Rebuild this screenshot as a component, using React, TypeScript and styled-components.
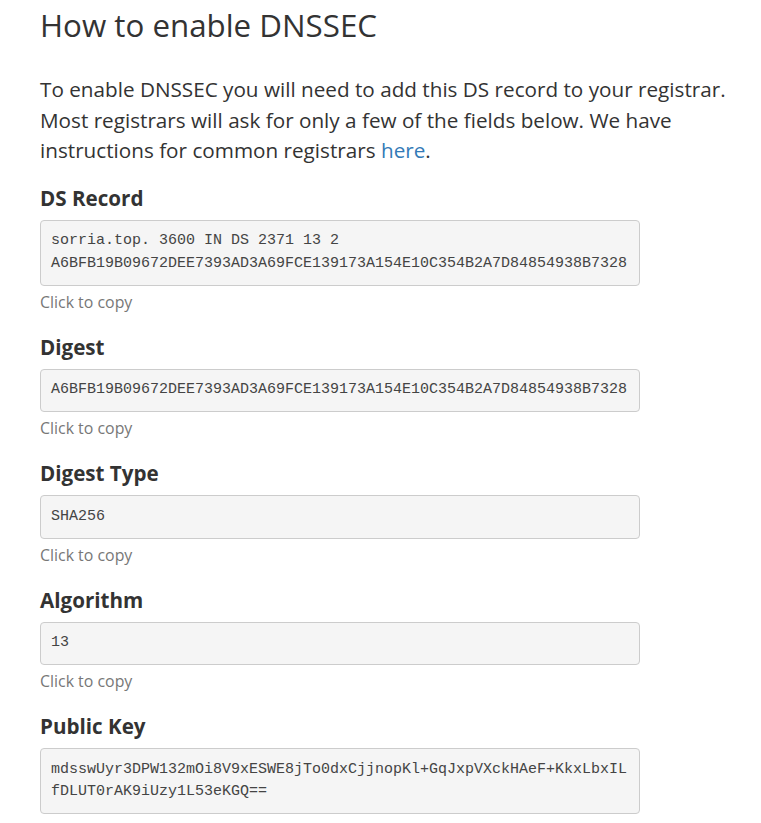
import React from "react";
import styled, { createGlobalStyle } from "styled-components";

const Global = createGlobalStyle`
  html, body { margin: 0; padding: 0; background: #fff; }
  body {
    font-family: "Open Sans", "Noto Sans", sans-serif;
    color: #333;
  }
`;

const Page = styled.main`
  padding: 0 0 0 40px;
  width: 761px;
  box-sizing: border-box;
`;

const Title = styled.h1`
  margin: 5px 0 0;
  font-size: 31.3px;
  font-weight: 400;
  line-height: 40px;
  color: #333;
`;

const Intro = styled.p`
  margin: 29px 0 0;
  font-size: 20.7px;
  line-height: 30.5px;
  max-width: 705px;
`;

const Link = styled.a`
  color: #337ab7;
  text-decoration: none;
`;

const Section = styled.section`
  margin-top: 22px;
  &:first-of-type { margin-top: 20px; }
`;

const Heading = styled.h4`
  margin: 0 0 10px;
  font-size: 20.6px;
  font-weight: 700;
  line-height: 24px;
  color: #333;
`;

const Code = styled.pre`
  margin: 0 0 5px;
  width: 600px;
  box-sizing: border-box;
  padding: 9.5px 10px;
  background: #f5f5f5;
  border: 1px solid #ccc;
  border-radius: 4px;
  font-family: "Liberation Mono", "Courier New", monospace;
  font-size: 15px;
  line-height: 22.5px;
  color: #444;
  white-space: pre-wrap;
  word-break: break-all;
`;

const Hint = styled.div`
  font-size: 15.9px;
  line-height: 22px;
  color: #777;
`;

const records: { label: string; value: string; hint?: boolean }[] = [
  {
    label: "DS Record",
    value:
      "sorria.top. 3600 IN DS 2371 13 2\nA6BFB19B09672DEE7393AD3A69FCE139173A154E10C354B2A7D84854938B7328",
    hint: true,
  },
  { label: "Digest", value: "A6BFB19B09672DEE7393AD3A69FCE139173A154E10C354B2A7D84854938B7328", hint: true },
  { label: "Digest Type", value: "SHA256", hint: true },
  { label: "Algorithm", value: "13", hint: true },
  {
    label: "Public Key",
    value: "mdsswUyr3DPW132mOi8V9xESWE8jTo0dxCjjnopKl+GqJxpVXckHAeF+KkxLbxIL\nfDLUT0rAK9iUzy1L53eKGQ==",
  },
];

export default function App() {
  return (
    <Page>
      <Global />
      <Title>How to enable DNSSEC</Title>
      <Intro>
        To enable DNSSEC you will need to add this DS record to your registrar. Most registrars will ask for
        only a few of the fields below. We have instructions for common registrars <Link href="#">here</Link>.
      </Intro>
      {records.map((r) => (
        <Section key={r.label}>
          <Heading>{r.label}</Heading>
          <Code>{r.value}</Code>
          {r.hint && <Hint>Click to copy</Hint>}
        </Section>
      ))}
    </Page>
  );
}
